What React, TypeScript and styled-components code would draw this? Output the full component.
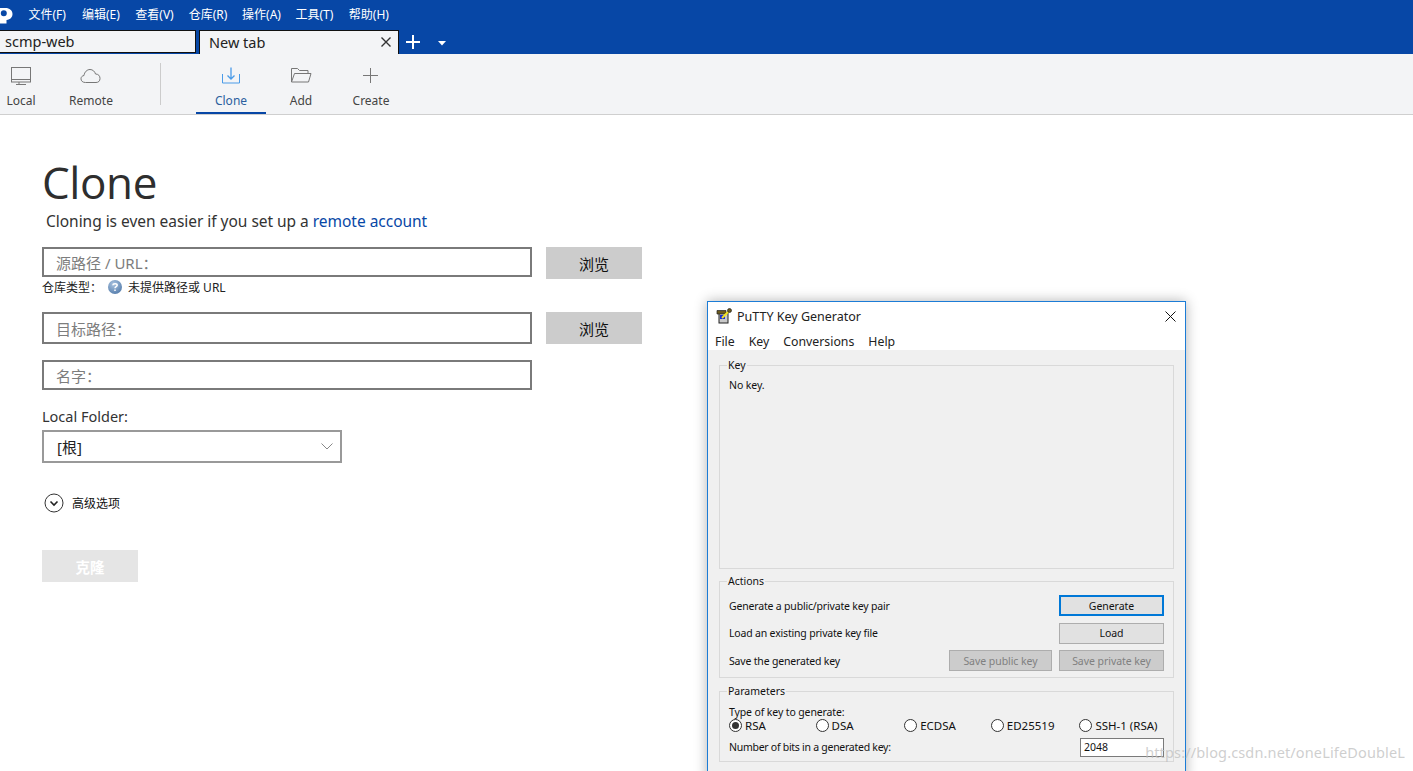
import React from "react";
import styled, { createGlobalStyle } from "styled-components";

const Global = createGlobalStyle`
  html, body { margin: 0; padding: 0; background: #fff; }
  body { width: 1413px; height: 771px; overflow: hidden; font-family: "Open Sans", "Noto Sans CJK SC", sans-serif; }
  * { box-sizing: border-box; }
`;
const CJK = `"Noto Sans", "Noto Sans CJK SC", sans-serif`;
const WIN = `"Noto Sans", "Noto Sans CJK SC", sans-serif`;

const Page = styled.div`position: relative; width: 1413px; height: 771px; overflow: hidden; background: #fff;`;
const Header = styled.header`height: 54px; background: #0747a6; display: flex; flex-direction: column;`;
const MenuBar = styled.div`height: 30px; display: flex; align-items: center; padding: 0 0 1px 28.5px; gap: 15px; position: relative; overflow: hidden;`;
const MenuItem = styled.span`color: #fff; font: 12px ${CJK}; line-height: 28px; width: 38.4px; white-space: nowrap;`;
const Logo = styled.svg`position: absolute; left: 0; top: 0;`;
const TabRow = styled.div`height: 24px; display: flex; align-items: flex-start;`;
const Tab = styled.div<{ $w: number; $active?: boolean }>`
  width: ${(p) => p.$w}px; height: ${(p) => (p.$active ? 24 : 23)}px; background: #f3f4f6; margin-right: 3px;
  border: 1.5px solid #111; ${(p) => p.$active && "border-bottom: none;"} ${(p) => !p.$active && "border-left: none;"}
  display: flex; align-items: center; justify-content: space-between; padding: 0 6px 2px ${(p) => (p.$active ? 9 : 5)}px;
  font: 14.5px "Noto Sans", sans-serif; color: #222;
`;
const TabIcon = styled.svg`flex: none;`;
const PlusIcon = styled(TabIcon)`margin: 4px 0 0 3px;`;
const CaretIcon = styled(TabIcon)`margin: 11px 0 0 17px;`;
const Toolbar = styled.nav`height: 61px; background: #f3f4f6; border-bottom: 1px solid #cfcfcf; display: flex; align-items: stretch;`;
const ToolItem = styled.div<{ $w: number; $ml?: number; $active?: boolean }>`
  width: ${(p) => p.$w}px; margin-left: ${(p) => p.$ml ?? 0}px; display: flex; flex-direction: column; align-items: center; height: 60px;
  padding-top: 13px; font: 12px "Noto Sans", sans-serif; color: ${(p) => (p.$active ? "#2b5f9e" : "#444")};
  border-bottom: 2px solid ${(p) => (p.$active ? "#0747a6" : "transparent")};
  span { margin-top: 5px; line-height: 18px; }
  svg { display: block; }
`;
const Sep = styled.div`width: 1px; height: 42px; margin: 9px 0 0 34px; background: #ccc;`;

const Main = styled.main`padding: 41px 0 0 42px;`;
const Title = styled.h1`margin: 0; font: 400 44px/52px "Open Sans", sans-serif; color: #2e2e2e; letter-spacing: -0.4px;`;
const Sub = styled.p`margin: 2px 0 0 4px; font: 15.5px/22px "Noto Sans", sans-serif; color: #333; height: 37px; letter-spacing: -0.03px;`;
const Link = styled.span`color: #0747a6;`;
const Row = styled.div<{ $mt: number }>`display: flex; gap: 14px; margin-top: ${(p) => p.$mt}px; align-items: flex-start;`;
const Field = styled.div<{ $h: number }>`
  width: 490px; height: ${(p) => p.$h}px; border: 2px solid #7a7a7a; padding-left: 12px; background: #fff;
  display: flex; align-items: center; font: 15px ${CJK}; color: #7d7d7d;
`;
const Browse = styled.div`
  width: 96px; height: 32px; background: #ccc; display: flex; align-items: center; justify-content: center;
  font: 15px ${CJK}; color: #111;
`;
const TypeRow = styled.div`display: flex; align-items: center; height: 18px; margin-top: -1px; font: 12px ${CJK}; color: #222;`;
const TypeLabel = styled.span`width: 65px;`;
const Help = styled.svg`margin-right: 5px;`;
const FolderLabel = styled.div`margin-top: 14px; height: 24px; font: 14.5px/24px "Noto Sans", sans-serif; color: #333;`;
const Select = styled.div`
  width: 300px; height: 33px; border: 2px solid #999; margin-top: 2px; padding: 0 7px 0 13px; display: flex; align-items: center;
  justify-content: space-between; font: 15px ${CJK}; color: #222;
`;
const Advanced = styled.div`display: flex; align-items: center; gap: 8px; margin: 30px 0 0 2px; height: 20px; font: 12px ${CJK}; color: #111;`;
const CloneBtn = styled.div`
  width: 96px; height: 32px; margin-top: 37px; background: #e5e5e5; color: #fff; display: flex; align-items: center;
  justify-content: center; font: 700 14.5px ${CJK};
`;

const Win = styled.section`
  position: absolute; left: 707px; top: 301px; width: 479px; height: 480px; background: #f0f0f0; border: 1px solid #1c7cd6;
  box-shadow: 0 0 12px rgba(0,0,0,.3); font: 11px ${WIN}; color: #111;
`;
const WinTitle = styled.div`height: 30px; background: #fff; display: flex; align-items: center; padding: 0 9px 2px 8px; gap: 5px; font-size: 12.5px; color: #222;`;
const WinTitleText = styled.span`flex: 1;`;
const WinMenu = styled.div`height: 18px; background: #fff; display: flex; gap: 14px; padding-left: 7px; font-size: 12.3px; line-height: 20px; color: #222;`;
const WinBody = styled.div`padding: 15px 11px 0;`;
const Group = styled.div<{ $h: number; $mt?: number }>`
  position: relative; height: ${(p) => p.$h}px; margin-top: ${(p) => p.$mt ?? 0}px; border: 1px solid #d9d9d9;
`;
const Legend = styled.span`position: absolute; left: 7px; top: -8px; line-height: 14px; padding: 0 1px; background: #f0f0f0; font-size: 10.5px;`;
const NoKey = styled.div`padding: 12px 0 0 9px; font-size: 10.5px; line-height: 14px; letter-spacing: -0.1px;`;
const ActionList = styled.div`padding: 13px 9px 0 9px; display: flex; flex-direction: column; gap: 6.5px;`;
const ActionRow = styled.div`display: flex; align-items: center; gap: 7px; height: 21px; font-size: 10.5px; letter-spacing: -0.18px;`;
const ActionText = styled.span`flex: 1;`;
const WinBtn = styled.div<{ $w: number; $focus?: boolean; $off?: boolean }>`
  width: ${(p) => p.$w}px; height: 21px; display: flex; align-items: center; justify-content: center; font-size: 10.5px; letter-spacing: -0.05px;
  background: ${(p) => (p.$off ? "#ccc" : "#e1e1e1")}; color: ${(p) => (p.$off ? "#808080" : "#111")};
  border: ${(p) => (p.$focus ? "2px solid #0078d7" : "1px solid #adadad")};
`;
const Params = styled.div`padding: 14px 9px 0 9px; font-size: 10.5px; line-height: 13px; letter-spacing: -0.12px;`;
const Radios = styled.div`display: flex; height: 14px; margin-top: -1px; font-size: 11.5px;`;
const RadioItem = styled.label<{ $w: number }>`width: ${(p) => p.$w}px; display: flex; align-items: center; gap: 3px; white-space: nowrap; letter-spacing: 0;`;
const RadioDot = styled.span<{ $on?: boolean }>`
  width: 13px; height: 13px; border-radius: 50%; border: 1px solid #333; background: #fff; flex: none; display: flex; align-items: center; justify-content: center;
  &::after { content: ""; width: 7px; height: 7px; border-radius: 50%; background: ${(p) => (p.$on ? "#333" : "transparent")}; }
`;
const BitsRow = styled.div`display: flex; align-items: center; justify-content: space-between; height: 19px; margin-top: 6px; letter-spacing: -0.27px;`;
const BitsInput = styled.div`width: 84px; height: 19px; background: #fff; border: 1px solid #7a7a7a; padding-left: 3px; line-height: 17px; letter-spacing: 0;`;
const Watermark = styled.div`position: absolute; right: 8px; top: 742px; font: 14.5px "Noto Sans", sans-serif; color: rgba(190,190,190,.75); letter-spacing: .14px; white-space: nowrap;`;

const stroke = { fill: "none", stroke: "#777", strokeWidth: 1 } as const;

export default function App() {
  return (
    <Page>
      <Global />
      <Header>
        <MenuBar>
          <Logo width="14" height="24" viewBox="0 0 14 24">
            <path fillRule="evenodd" fill="#fff" d="M0 8H5.5C9.5 8 12.5 10.5 12.5 14 12.5 17 10.5 19.5 6.5 20V23.5H0ZM0.8 13.3A3 3 0 1 0 6.8 13.3 3 3 0 1 0 0.8 13.3Z" />
          </Logo>
          {["文件(F)", "编辑(E)", "查看(V)", "仓库(R)", "操作(A)", "工具(T)", "帮助(H)"].map((t) => (
            <MenuItem key={t}>{t}</MenuItem>
          ))}
        </MenuBar>
        <TabRow>
          <Tab $w={196}>scmp-web</Tab>
          <Tab $w={200} $active>
            New tab
            <TabIcon width="12" height="12" viewBox="0 0 12 12"><path d="M1.5 1.5 10.5 10.5M10.5 1.5 1.5 10.5" stroke="#333" strokeWidth="1.4" /></TabIcon>
          </Tab>
          <PlusIcon width="16" height="16" viewBox="0 0 16 16"><path d="M8 1V15M1 8H15" stroke="#fff" strokeWidth="2" /></PlusIcon>
          <CaretIcon width="8" height="5" viewBox="0 0 8 5"><path d="M0 0H8L4 4.5Z" fill="#fff" /></CaretIcon>
        </TabRow>
      </Header>
      <Toolbar>
        <ToolItem $w={42}>
          <svg width="22" height="20" viewBox="0 0 22 20"><rect x="1.5" y=".5" width="19" height="14.5" {...stroke} /><path d="M1.5 12.5H20.5M9 15V17M6 17.5H16" {...stroke} /></svg>
          <span>Local</span>
        </ToolItem>
        <ToolItem $w={70} $ml={14}>
          <svg width="22" height="20" viewBox="0 0 22 20"><path d="M5.5 15.5C2.5 15.5 1 13.8 1 11.8 1 10 2.2 8.8 4 8.5 4.5 5 7 2.5 10 2.5 12.8 2.5 14.8 4.5 15.5 7 18.5 7 20 9 20 11.5 20 14 18.5 15.5 16 15.5Z" {...stroke} /></svg>
          <span>Remote</span>
        </ToolItem>
        <Sep />
        <ToolItem $w={70} $ml={35} $active>
          <svg width="22" height="20" viewBox="0 0 22 20"><path d="M2.5 7V16H19.5V7" fill="none" stroke="#4a9be8" /><path d="M11 .5V12M7.5 8.5 11 12 14.5 8.5" fill="none" stroke="#4a9be8" strokeWidth="1.3" /></svg>
          <span>Clone</span>
        </ToolItem>
        <ToolItem $w={70}>
          <svg width="22" height="20" viewBox="0 0 22 20"><path d="M1.5 15V1.5H7.5L9.5 3.5H18V6M1.5 15 4.5 6.5H21L18.5 15Z" {...stroke} /></svg>
          <span>Add</span>
        </ToolItem>
        <ToolItem $w={70}>
          <svg width="22" height="20" viewBox="0 0 22 20"><path d="M10.5 1V16M3 8.5H18" {...stroke} /></svg>
          <span>Create</span>
        </ToolItem>
      </Toolbar>
      <Main>
        <Title>Clone</Title>
        <Sub>Cloning is even easier if you set up a <Link>remote account</Link></Sub>
        <Row $mt={0}>
          <Field $h={30}>源路径 / URL：</Field>
          <Browse>浏览</Browse>
        </Row>
        <TypeRow>
          <TypeLabel>仓库类型：</TypeLabel>
          <Help width="16" height="16" viewBox="0 0 16 16">
            <defs><radialGradient id="h" cx=".4" cy=".3" r=".8"><stop offset="0" stopColor="#a9c3e0" /><stop offset="1" stopColor="#4f78a8" /></radialGradient></defs>
            <circle cx="8" cy="8" r="7" fill="url(#h)" />
            <path d="M5.8 6.3C6 4.2 10.2 4.2 10.2 6.3 10.2 7.8 8 7.6 8 9.3M8 10.6V12" fill="none" stroke="#fff" strokeWidth="1.5" />
          </Help>
          <span>未提供路径或 URL</span>
        </TypeRow>
        <Row $mt={16}>
          <Field $h={32}>目标路径：</Field>
          <Browse>浏览</Browse>
        </Row>
        <Row $mt={16}>
          <Field $h={30}>名字：</Field>
        </Row>
        <FolderLabel>Local Folder:</FolderLabel>
        <Select>
          [根]
          <svg width="12" height="7" viewBox="0 0 12 7"><path d="M.5.5 6 6 11.5.5" fill="none" stroke="#888" /></svg>
        </Select>
        <Advanced>
          <svg width="20" height="20" viewBox="0 0 20 20"><circle cx="10" cy="10" r="9" fill="none" stroke="#333" /><path d="M6.5 8.5 10 12 13.5 8.5" fill="none" stroke="#222" strokeWidth="1.6" /></svg>
          高级选项
        </Advanced>
        <CloneBtn>克隆</CloneBtn>
      </Main>
      <Win>
        <WinTitle>
          <svg width="16" height="16" viewBox="0 0 16 16">
            <rect x="3" y="5" width="9" height="10" fill="#c8c8c8" stroke="#222" />
            <rect x="4" y="7" width="5" height="4" fill="#1a2fd0" />
            <path d="M1 2.5H10V6H1Z" fill="#6b5a1e" stroke="#222" strokeWidth=".7" />
            <path d="M6 10 13 3" stroke="#f4e21a" strokeWidth="2" />
            <circle cx="13.5" cy="2.5" r="2" fill="#6b5a1e" stroke="#222" strokeWidth=".7" />
          </svg>
          <WinTitleText>PuTTY Key Generator</WinTitleText>
          <svg width="11" height="11" viewBox="0 0 11 11"><path d="M.5.5 10.5 10.5M10.5.5 .5 10.5" stroke="#111" /></svg>
        </WinTitle>
        <WinMenu><span>File</span><span>Key</span><span>Conversions</span><span>Help</span></WinMenu>
        <WinBody>
          <Group $h={204}>
            <Legend>Key</Legend>
            <NoKey>No key.</NoKey>
          </Group>
          <Group $h={97} $mt={12}>
            <Legend>Actions</Legend>
            <ActionList>
              <ActionRow><ActionText>Generate a public/private key pair</ActionText><WinBtn $w={105} $focus>Generate</WinBtn></ActionRow>
              <ActionRow><ActionText>Load an existing private key file</ActionText><WinBtn $w={105}>Load</WinBtn></ActionRow>
              <ActionRow><ActionText>Save the generated key</ActionText><WinBtn $w={103} $off>Save public key</WinBtn><WinBtn $w={105} $off>Save private key</WinBtn></ActionRow>
            </ActionList>
          </Group>
          <Group $h={71} $mt={13}>
            <Legend>Parameters</Legend>
            <Params>
              Type of key to generate:
              <Radios>
                <RadioItem $w={87}><RadioDot $on />RSA</RadioItem>
                <RadioItem $w={89}><RadioDot />DSA</RadioItem>
                <RadioItem $w={87}><RadioDot />ECDSA</RadioItem>
                <RadioItem $w={89}><RadioDot />ED25519</RadioItem>
                <RadioItem $w={85}><RadioDot />SSH-1 (RSA)</RadioItem>
              </Radios>
              <BitsRow><span>Number of bits in a generated key:</span><BitsInput>2048</BitsInput></BitsRow>
            </Params>
          </Group>
        </WinBody>
      </Win>
      <Watermark>https://blog.csdn.net/oneLifeDoubleL</Watermark>
    </Page>
  );
}
